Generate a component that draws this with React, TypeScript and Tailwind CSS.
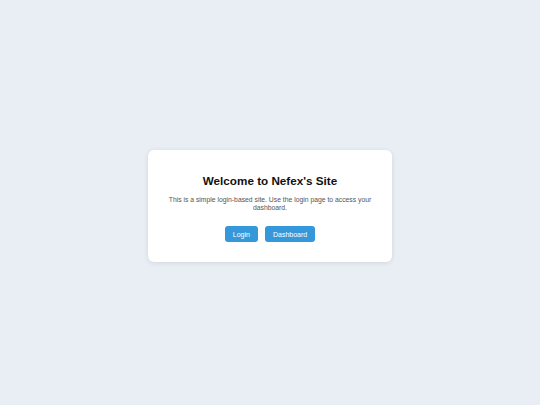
export default function App() {
  return (
    <div className="min-h-screen w-full bg-[#e9eef5] flex items-center justify-center font-['Liberation_Sans',Arial,sans-serif]">
      <div className="w-[244px] bg-white rounded-[6px] shadow-[0_1px_5px_rgba(0,0,0,0.1)] px-[18px] pt-6 pb-5 text-center mt-[7px]">
        <h1 className="text-[11.7px] leading-[14px] font-bold text-[#111]">Welcome to Nefex's Site</h1>
        <p className="mt-[8px] text-[6.8px] leading-[8px] text-[#555]">
          This is a simple login-based site. Use the login page to access your dashboard.
        </p>
        <div className="mt-[14px] flex justify-center gap-[7px]">
          <button className="h-4 px-2 rounded-[3px] bg-[#3498db] text-white text-[7px] leading-none">Login</button>
          <button className="h-4 px-2 rounded-[3px] bg-[#3498db] text-white text-[7px] leading-none">Dashboard</button>
        </div>
      </div>
    </div>
  );
}
